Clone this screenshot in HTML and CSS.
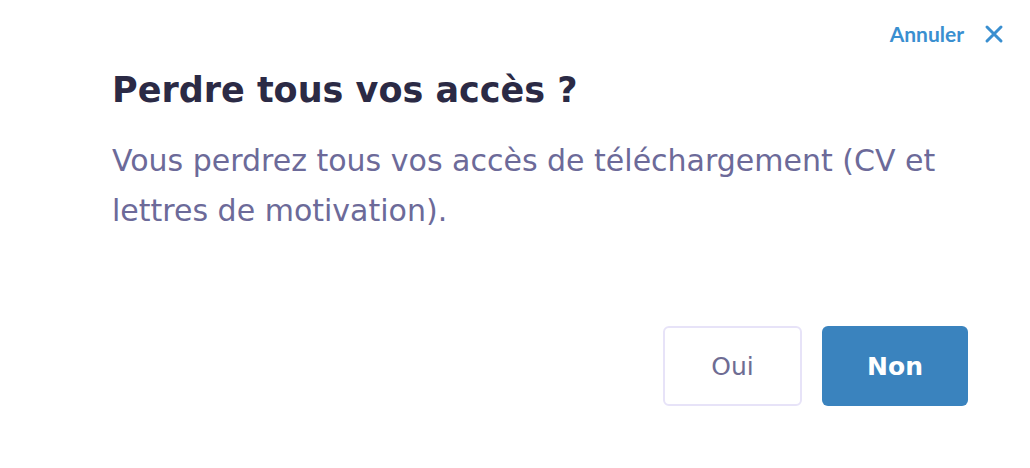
FILE: index.html
```html
<!DOCTYPE html>
<html lang="fr">
<head>
  <meta charset="UTF-8" />
  <meta name="viewport" content="width=device-width, initial-scale=1" />
  <title>Perdre tous vos accès ?</title>
  <link rel="stylesheet" href="styles.css">
</head>
<body>
  <div class="modal">
    <div class="modal-top">
      <a class="cancel" href="#">
        Annuler
        <svg class="cancel-icon" viewBox="0 0 20 20" width="20" height="20" aria-hidden="true">
          <path d="M3 3 L17 17 M17 3 L3 17" stroke="currentColor" stroke-width="3" stroke-linecap="round" fill="none" />
        </svg>
      </a>
    </div>

    <div class="modal-body">
      <h1>Perdre tous vos accès ?</h1>
      <p>Vous perdrez tous vos accès de téléchargement (CV et lettres de motivation).</p>
    </div>

    <div class="modal-actions">
      <button class="btn btn-ghost">Oui</button>
      <button class="btn btn-primary">Non</button>
    </div>
  </div>
</body>
</html>
```

FILE: styles.css
```css
html, body {
  margin: 0;
  padding: 0;
  background: #fff;
  font-family: "DejaVu Sans", "Open Sans", sans-serif;
}

.modal {
  width: 1030px;
  height: 468px;
  box-sizing: border-box;
  display: flex;
  flex-direction: column;
}

/* Haut : bouton annuler */
.modal-top {
  display: flex;
  justify-content: flex-end;
  height: 48px;
  padding: 0 26px 0 0;
  box-sizing: border-box;
  align-items: flex-end;
}

.cancel {
  display: flex;
  align-items: center;
  gap: 20px;
  padding-bottom: 2px;
  color: #3a8fd0;
  font-family: Lato, sans-serif;
  font-size: 21px;
  font-weight: 700;
  text-decoration: none;
}

.cancel-icon {
  display: block;
}

/* Contenu */
.modal-body {
  padding: 0 68px 0 112px;
}

.modal-body h1 {
  margin: 18px 0 0 0;
  font-size: 35px;
  font-weight: 700;
  color: #2b2a45;
  line-height: 48px;
}

.modal-body p {
  margin: 22px 0 0 0;
  font-size: 30px;
  line-height: 50px;
  color: #6c6a99;
}

/* Boutons */
.modal-actions {
  display: flex;
  justify-content: flex-end;
  gap: 20px;
  padding: 0 62px 0 0;
  margin-top: 90px;
}

.btn {
  height: 80px;
  border-radius: 6px;
  font-family: inherit;
  font-size: 25px;
  font-weight: 700;
  cursor: pointer;
}

.btn-ghost {
  width: 139px;
  background: #fff;
  border: 2px solid #e7e3f8;
  color: #6e6c93;
  font-weight: 400;
}

.btn-primary {
  width: 146px;
  background: #3a83be;
  border: none;
  color: #fff;
}
```
